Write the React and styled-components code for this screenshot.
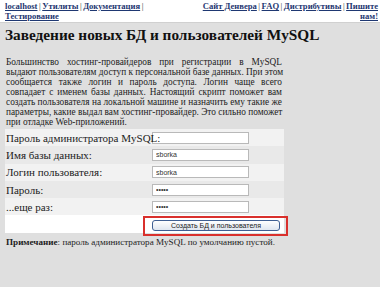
import React from "react";
import styled, { createGlobalStyle } from "styled-components";

const Global = createGlobalStyle`
  html, body { margin: 0; padding: 0; background: #dfdfdf; }
  body { font-family: "Liberation Serif", "Times New Roman", serif; color: #111; width: 380px; height: 287px; overflow: hidden; }
`;

const Header = styled.div`
  display: flex;
  justify-content: space-between;
  align-items: flex-start;
  background: #fff;
  height: 23px;
  box-sizing: border-box;
  padding: 1px 2px 0 5px;
  border-bottom: 1px solid #d0d0d0;
  font-size: 8.6px;
  line-height: 10px;
  font-weight: bold;
`;

const Nav = styled.div`
  width: ${(p) => p.$w}px;
  text-align: ${(p) => p.$align};
  color: #333;
`;

const Link = styled.a`
  color: #1f3872;
  text-decoration: underline;
`;

const Sep = styled.span`
  font-weight: normal;
  color: #333;
  margin: 0 1.5px;
`;

const Title = styled.h1`
  margin: 2px 0 0 5px;
  font-size: 15.3px;
  line-height: 20px;
  font-weight: bold;
  color: #111;
  white-space: nowrap;
`;

const Content = styled.div`
  width: 279px;
  margin-left: 5px;
`;

const Para = styled.div`
  margin: 12px 0 2px 1px;
  width: 276px;
  font-size: 9.3px;
  line-height: 10px;
  color: #222;
`;

const Line = styled.div`
  white-space: nowrap;
  text-align: ${(p) => (p.$last ? "left" : "justify")};
  text-align-last: ${(p) => (p.$last ? "left" : "justify")};
`;

const Table = styled.table`
  width: 279px;
  table-layout: fixed;
  border-collapse: collapse;
  font-size: 11px;
`;

const Row = styled.tr`
  height: 17.3px;
  background: ${(p) => (p.$white ? "#fff" : p.$alt ? "#e9e9e9" : "#f2f2f2")};
`;

const Label = styled.td`
  padding: 0 0 0 1px;
  width: 144px;
  color: #222;
  white-space: nowrap;
  line-height: 12px;
`;

const Cell = styled.td`
  padding: 0 0 0 2px;
  vertical-align: middle;
`;

const Input = styled.input`
  display: block;
  box-sizing: border-box;
  width: 97px;
  height: 12px;
  margin: 0;
  padding: 0 3px;
  border: 1px solid #b9b9b9;
  background: #fff;
  font-family: "Liberation Sans", Arial, sans-serif;
  font-size: 7px;
  color: #333;
  outline: none;
`;

const Highlight = styled.span`
  position: relative;
  display: inline-block;
  &::after {
    content: "";
    position: absolute;
    left: -9px;
    top: -4px;
    right: -8px;
    bottom: -5px;
    border: 2.5px solid #d9302c;
  }
`;

const Button = styled.button`
  display: block;
  width: 128px;
  height: 11px;
  margin: 0;
  padding: 0;
  border: 1px solid #3f5f93;
  border-radius: 3px;
  background: linear-gradient(#ffffff, #dfe6f0);
  font-family: "Liberation Sans", Arial, sans-serif;
  font-size: 7px;
  line-height: 9px;
  color: #222;
`;

const Note = styled.p`
  margin: 3px 0 0 1px;
  font-size: 9.1px;
  line-height: 12px;
  color: #222;
  white-space: nowrap;
`;

const leftLinks = ["localhost", "Утилиты", "Документация"];
const rightLinks = ["Сайт Денвера", "FAQ", "Дистрибутивы"];

const paraLines = [
  "Большинство хостинг-провайдеров при регистрации в MySQL",
  "выдают пользователям доступ к персональной базе данных. При этом",
  "сообщается также логин и пароль доступа. Логин чаще всего",
  "совпадает с именем базы данных. Настоящий скрипт поможет вам",
  "создать пользователя на локальной машине и назначить ему такие же",
  "параметры, какие выдал вам хостинг-провайдер. Это сильно поможет",
  "при отладке Web-приложений.",
];

const fields = [
  { label: "Пароль администратора MySQL:", type: "password", value: "" },
  { label: "Имя базы данных:", type: "text", value: "sborka" },
  { label: "Логин пользователя:", type: "text", value: "sborka" },
  { label: "Пароль:", type: "password", value: "12345" },
  { label: "...еще раз:", type: "password", value: "12345" },
];

export default function App() {
  return (
    <>
      <Global />
      <Header>
        <Nav $w={160} $align="left">
          {leftLinks.map((l, i) => (
            <React.Fragment key={l}>
              {i > 0 && <Sep>|</Sep>}
              <Link href="#">{l}</Link>
            </React.Fragment>
          ))}
          <Sep>|</Sep>
          <Link href="#">Тестирование</Link>
        </Nav>
        <Nav $w={182} $align="right">
          {rightLinks.map((l) => (
            <React.Fragment key={l}>
              <Link href="#">{l}</Link>
              <Sep>|</Sep>
            </React.Fragment>
          ))}
          <Link href="#">Пишите нам!</Link>
        </Nav>
      </Header>
      <Title>Заведение новых БД и пользователей MySQL</Title>
      <Content>
        <Para>
          {paraLines.map((t, i) => (
            <Line key={i} $last={i === paraLines.length - 1}>
              {t}
            </Line>
          ))}
        </Para>
        <Table>
          <tbody>
            {fields.map((f, i) => (
              <Row key={f.label} $alt={i % 2 === 1}>
                <Label>{f.label}</Label>
                <Cell>
                  <Input type={f.type} defaultValue={f.value} readOnly />
                </Cell>
              </Row>
            ))}
            <Row $white>
              <Label />
              <Cell>
                <Highlight>
                  <Button type="button">Создать БД и пользователя</Button>
                </Highlight>
              </Cell>
            </Row>
          </tbody>
        </Table>
        <Note>
          <b>Примечание</b>: пароль администратора MySQL по умолчанию пустой.
        </Note>
      </Content>
    </>
  );
}
